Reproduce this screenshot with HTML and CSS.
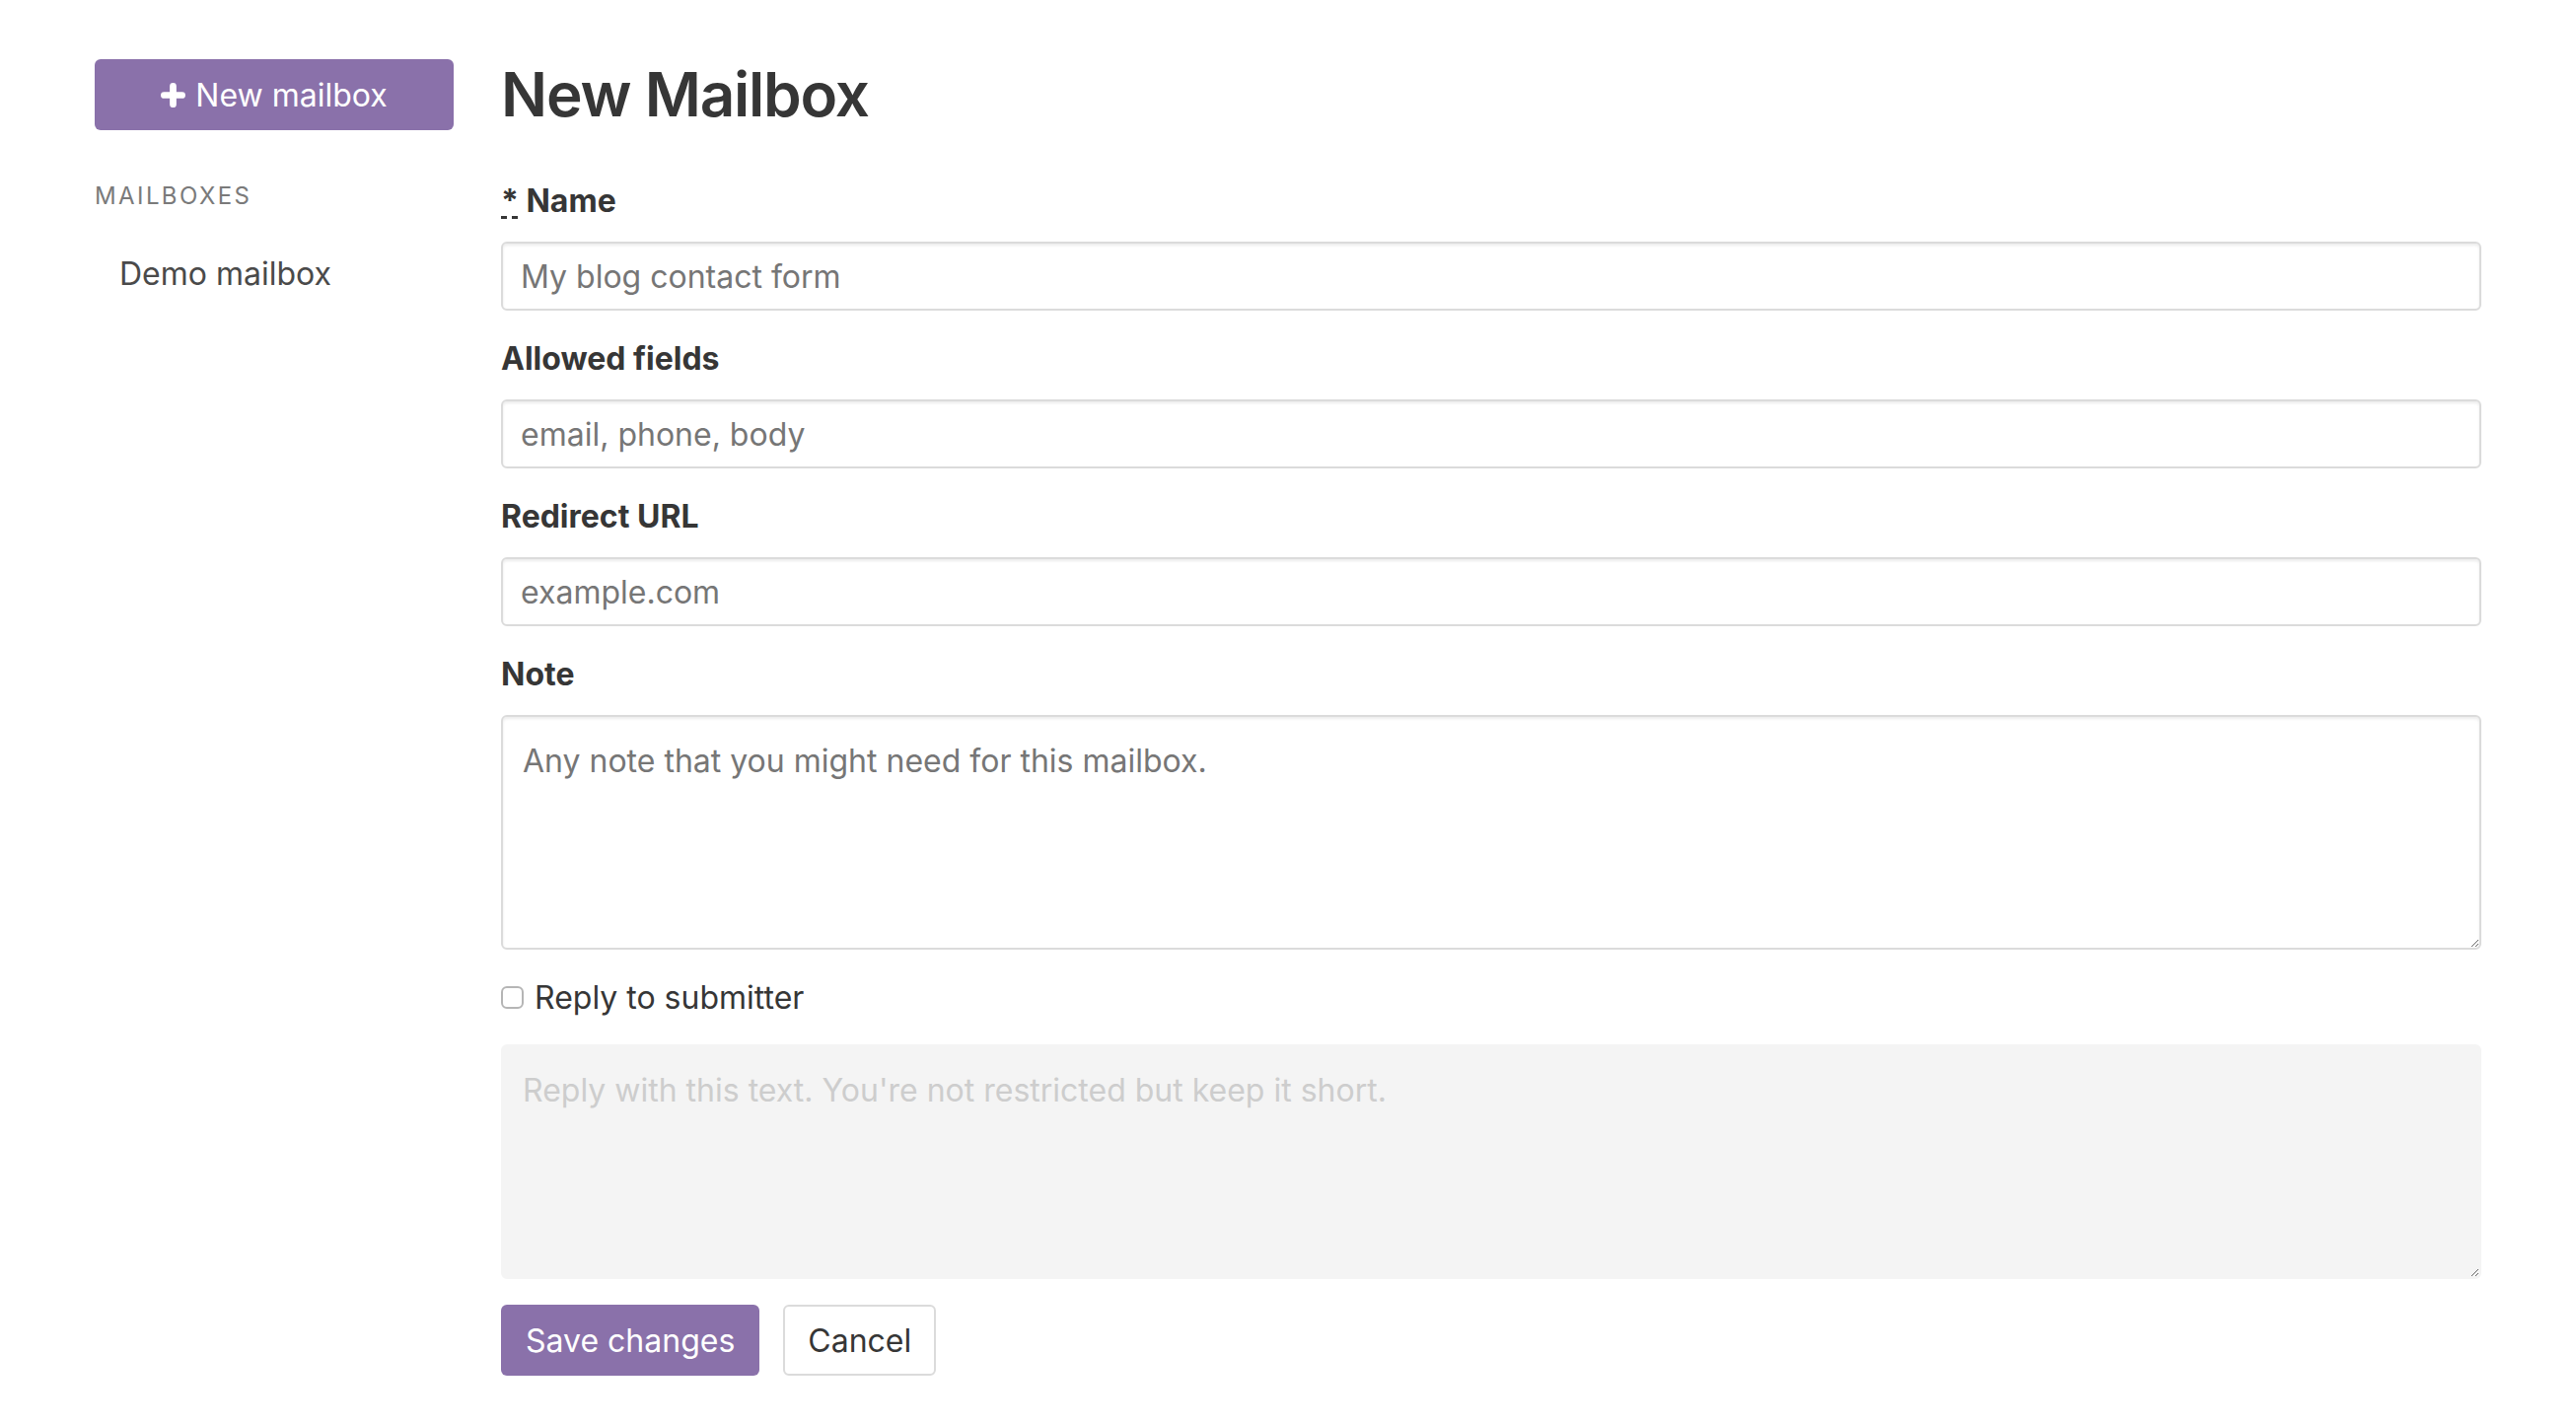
FILE: index.html
```html
<!DOCTYPE html>
<html lang="en">
<head>
<meta charset="utf-8">
<title>New Mailbox</title>
<link rel="stylesheet" href="styles.css">
</head>
<body>
<div class="page">
  <aside class="sidebar">
    <a class="btn btn-primary btn-new" href="#">
      <svg class="plus" viewBox="0 0 26 26" width="25" height="25" aria-hidden="true"><path d="M13 3.5v19M3.5 13h19" stroke="#fff" stroke-width="7" stroke-linecap="round"/></svg>
      <span>New mailbox</span>
    </a>
    <p class="menu-label">Mailboxes</p>
    <ul class="menu-list">
      <li><a href="#">Demo mailbox</a></li>
    </ul>
  </aside>
  <main class="main">
    <h1 class="title">New Mailbox</h1>
    <form class="form">
      <div class="field">
        <label class="label"><abbr title="required">*</abbr> Name</label>
        <input class="input" type="text" placeholder="My blog contact form">
      </div>
      <div class="field">
        <label class="label">Allowed fields</label>
        <input class="input" type="text" placeholder="email, phone, body">
      </div>
      <div class="field">
        <label class="label">Redirect URL</label>
        <input class="input" type="text" placeholder="example.com">
      </div>
      <div class="field">
        <label class="label">Note</label>
        <textarea class="textarea" placeholder="Any note that you might need for this mailbox."></textarea>
      </div>
      <label class="checkbox"><input type="checkbox" class="check"> Reply to submitter</label>
      <textarea class="textarea textarea-disabled" disabled placeholder="Reply with this text. You're not restricted but keep it short."></textarea>
      <div class="actions">
        <button type="button" class="btn btn-primary">Save changes</button>
        <button type="button" class="btn btn-default">Cancel</button>
      </div>
    </form>
  </main>
</div>
</body>
</html>
```
FILE: styles.css
```css
* { box-sizing: border-box; }
html, body { margin: 0; padding: 0; background: #fff; }
body {
  font-family: Inter, "Noto Sans", "Liberation Sans", sans-serif;
  color: #4a4a4a;
  font-size: 32px;
}
.page {
  display: grid;
  grid-template-columns: 364px 1fr;
  column-gap: 48px;
  padding: 60px 96px 0 96px;
}
.sidebar { display: flex; flex-direction: column; align-items: stretch; }
.btn {
  display: inline-flex;
  align-items: center;
  justify-content: center;
  height: 72px;
  border-radius: 6px;
  font-family: inherit;
  font-size: 32px;
  text-decoration: none;
  cursor: pointer;
  border: 2px solid transparent;
  padding: 0 23px;
}
.btn-primary { background: #8a71aa; color: #fff; }
.btn-default { background: #fff; color: #363636; border-color: #dbdbdb; }
.btn-new { width: 364px; gap: 10px; }
.plus { display: block; }
.menu-label {
  margin: 49px 0 29px 0;
  font-size: 24px;
  line-height: 1.5;
  letter-spacing: 0.1em;
  text-transform: uppercase;
  color: #7a7a7a;
}
.menu-list { list-style: none; margin: 0; padding: 0; }
.menu-list a {
  display: block;
  padding: 12px 25px;
  line-height: 1.25;
  color: #4a4a4a;
  text-decoration: none;
}
.main { min-width: 0; }
.title {
  margin: 0 0 49px 0;
  font-size: 62px;
  line-height: 72px;
  font-weight: 600;
  letter-spacing: -1.2px;
  color: #363636;
}
.form { display: flex; flex-direction: column; }
.field { display: flex; flex-direction: column; margin-bottom: 26px; }
.label {
  font-size: 32px;
  line-height: 45px;
  font-weight: 700;
  color: #363636;
  margin-bottom: 19px;
}
.label abbr { text-decoration: underline dashed; text-underline-offset: 4px; }
.input, .textarea {
  width: 100%;
  font-family: inherit;
  font-size: 32px;
  color: #363636;
  background: #fff;
  border: 2px solid #dbdbdb;
  border-radius: 6px;
  box-shadow: inset 0 2px 3px rgba(10,10,10,0.08);
  outline: none;
}
.input { height: 70px; padding: 0 18px; }
.textarea {
  height: 238px;
  padding: 21px 20px;
  line-height: 1.5;
  resize: vertical;
  display: block;
}
.input::placeholder, .textarea::placeholder { color: #767676; opacity: 1; }
.textarea-disabled {
  background: #f4f4f4;
  border-color: #f4f4f4;
  box-shadow: none;
}
.textarea-disabled::placeholder { color: #cdcdcd; }
.field:last-of-type { margin-bottom: 33px; }
.checkbox {
  display: flex;
  align-items: center;
  gap: 11px;
  font-size: 32px;
  line-height: 45px;
  color: #363636;
  margin-bottom: 25px;
}
.check {
  appearance: none;
  -webkit-appearance: none;
  margin: 0;
  width: 23px;
  height: 23px;
  border: 2px solid #b5b5b5;
  border-radius: 6px;
  background: #fff;
}
.actions { display: flex; gap: 24px; margin-top: 26px; }
```
